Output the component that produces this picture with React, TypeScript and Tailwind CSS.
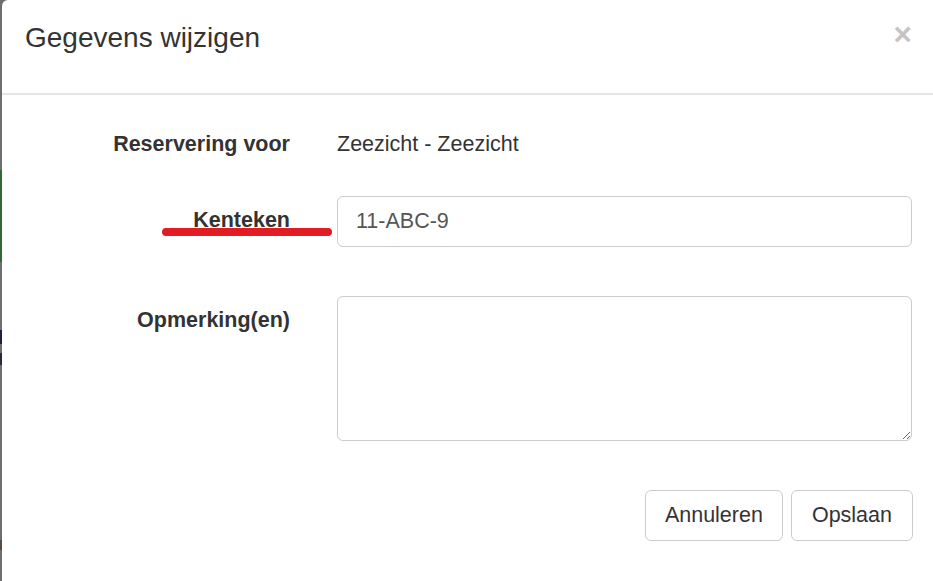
export default function App() {
  return (
    <div
      className="min-h-screen w-full flex bg-[#6e6e6e] overflow-hidden"
      style={{ fontFamily: '"Liberation Sans", Arial, sans-serif' }}
    >
      {/* backdrop sliver on the left */}
      <div className="w-[2px] flex flex-col shrink-0">
        <div className="h-[170px] bg-[#6e6e6e]" />
        <div className="h-[92px] bg-[#2f6a35]" />
        <div className="h-[68px] bg-[#6e6e6e]" />
        <div className="h-[14px] bg-[#1d2336]" />
        <div className="h-[9px] bg-[#6e6e6e]" />
        <div className="h-[12px] bg-[#2a2a3a]" />
        <div className="h-[175px] bg-[#6e6e6e]" />
        <div className="h-[10px] bg-[#5a4a40]" />
        <div className="flex-1 bg-[#6e6e6e]" />
      </div>

      <div className="relative flex-1 bg-white rounded-tl-[6px] min-h-[581px]">
        <div className="h-[95px] border-b-2 border-[#e5e5e5] flex items-start justify-between pl-[23px] pr-[21px]">
          <h4 className="mt-[24px] text-[28px] leading-[28px] font-normal text-[#333]">
            Gegevens wijzigen
          </h4>
          <button className="mt-[19px] text-[31.5px] leading-none font-bold text-[#c4c4c4]">
            ×
          </button>
        </div>

        <div className="pt-[24px] pl-[22px] grid grid-cols-[266px_575px] gap-x-[47px] text-[21.5px] leading-[30px] text-[#333]">
          <label className="h-[51px] pt-[10px] text-right font-bold">Reservering voor</label>
          <div className="h-[51px] pt-[10px]">Zeezicht - Zeezicht</div>

          <label className="mt-[26px] pt-[9px] text-right font-bold">Kenteken</label>
          <input
            readOnly
            value="11-ABC-9"
            className="mt-[26px] h-[51px] w-full rounded-[6px] border-[1.5px] border-[#ccc] px-[18px] text-[#555] outline-none"
          />

          <label className="mt-[49px] pt-[9px] text-right font-bold">Opmerking(en)</label>
          <textarea
            readOnly
            className="mt-[49px] h-[145px] w-full rounded-[6px] border-[1.5px] border-[#ccc] px-[18px] py-[9px] text-[#555] outline-none"
          />
        </div>

        <div className="mt-[49px] pr-[20px] flex justify-end gap-[8px] text-[21.5px] text-[#333]">
          <button className="h-[51px] px-[19px] rounded-[6px] border-[1.5px] border-[#ccc] bg-white">
            Annuleren
          </button>
          <button className="h-[51px] px-[20px] rounded-[6px] border-[1.5px] border-[#ccc] bg-white">
            Opslaan
          </button>
        </div>

        {/* red annotation stroke */}
        <div className="absolute left-[160px] top-[228px] w-[170px] h-[8px] rounded-full bg-[#e31b23]" />
      </div>
    </div>
  );
}
